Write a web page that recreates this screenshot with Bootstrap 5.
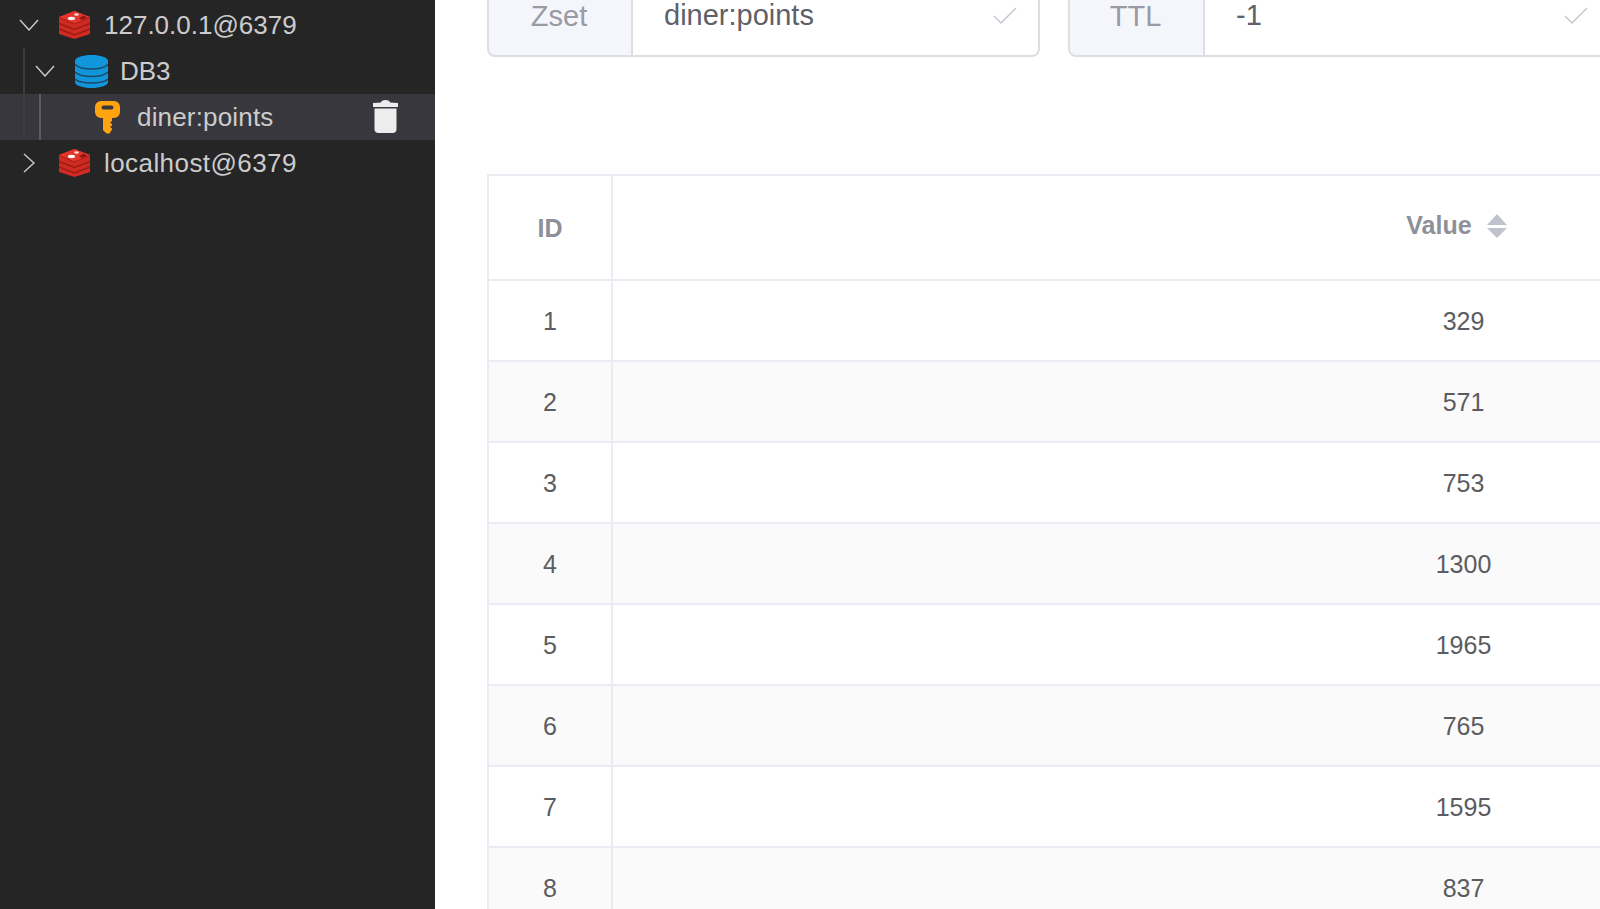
<!DOCTYPE html>
<html lang="en">
<head>
<meta charset="utf-8">
<title>Redis client</title>
<link href="https://cdn.jsdelivr.net/npm/bootstrap@5.3.0/dist/css/bootstrap.min.css" rel="stylesheet">
<style>
html,body{height:100%;overflow:hidden;background:#fff;font-family:"Liberation Sans",Arial,sans-serif}
.app-shell{height:909px;width:1600px}
.side-pane{width:435px;flex:none;background:#252526;padding-top:2px;color:#ccc;font-size:26px}
.tree-row{height:46px;line-height:46px;white-space:nowrap}
.tree-row.is-active{background:#37373d}
.guide{flex:none;width:2px;align-self:stretch}
.guide-outer{margin-left:23px;background:#3d3d3f}
.guide-inner{margin-left:14px;background:#5c5c60}
.twisty{flex:none;display:block}
.twisty-first{margin-left:19px}
.twisty-second{margin-left:10px}
.twisty-closed{margin-left:23px}
.tree-icon{flex:none;display:block}
.icon-redis-open{margin-left:19px}
.icon-redis-closed{margin-left:23px}
.icon-db{margin-left:20px}
.icon-key{margin-left:54px}
.tree-label{margin-left:13px}
.label-db{margin-left:12px}
.label-key{margin-left:17px;letter-spacing:.17px}
.label-host{letter-spacing:.43px}
.trash-icon{margin-left:auto;margin-right:37px;margin-bottom:2px;flex:none}
.main-pane{flex:1 1 auto;min-width:0;padding-left:52px;overflow:hidden;margin-top:-24px;height:933px}
.field-line{gap:28px;width:1400px;flex-wrap:nowrap}
.field-group{height:81px;flex:none;flex-wrap:nowrap;font-size:29px}
.field-key{width:553px}
.field-ttl{width:543px}
.field-group .input-group-text{background:#f5f6fb;border:2px solid #dcdee2;border-radius:8px 0 0 8px;color:#999aa3;font-size:29px;justify-content:center;padding:0 2px 0 0}
.field-key .input-group-text{width:146px}
.field-ttl .input-group-text{width:137px}
.field-group .form-control{border:2px solid #dcdee2;border-left:0;border-radius:0 8px 8px 0!important;color:#5f6168;font-size:29px;padding:0 21px 2px 31px;margin-left:0!important;line-height:1}
.grid-wrap{margin-top:117px}
.data-table{width:1829px;max-width:none;table-layout:fixed;border-collapse:separate;border-spacing:0;margin:0;--bs-table-color:#5b5c61;--bs-table-bg:#fff}
.data-table th,.data-table td{border:0;border-right:2px solid #e9ecf2;border-bottom:2px solid #e9ecf2;padding:0;text-align:center;vertical-align:middle;color:#5b5c61;font-size:25px}
.data-table tr>*:first-child{border-left:2px solid #e9ecf2;width:126px}
.data-table thead th{height:107px;border-top:2px solid #e9ecf2;color:#8e9099;font-weight:700}
.data-table tbody td{height:81.05px;padding-top:2px}
.data-table tbody tr:nth-child(even) td{background:#fafafa}
.data-table thead .value-head{padding-right:14px;padding-bottom:4px}
.data-table thead .id-head{padding-top:3px}
.sort-arrows{margin-left:15px;margin-top:-3px;vertical-align:middle;display:inline-block}
</style>
</head>
<body>
<div class="app-shell d-flex">
  <aside class="side-pane">
    <div class="tree-row d-flex align-items-center">
      <svg class="twisty twisty-first" width="20" height="12" viewBox="0 0 20 12"><path d="M1 1l9 10 9-10" fill="none" stroke="#ccc" stroke-width="1.4"/></svg>
      <svg class="tree-icon icon-redis-open" width="33" height="28" viewBox="0 0 33 28"><path d="M16.500 0L32 6v17l-15.500 5L1 23V6z" fill="#cf2b22"/><path d="M16.500 0L32 6 16.500 12.500 1 6z" fill="#e4352a"/><path d="M1 12.500l15.500 6 15.500-6M1 18l15.500 6 15.500-6" fill="none" stroke="#9c1c15" stroke-width="1.500"/><path d="M1 6.500l15.500 6.500 15.500-6.500" fill="none" stroke="#a81f17" stroke-width="1"/><ellipse cx="13.500" cy="7.500" rx="3.600" ry="1.700" fill="#fff"/><ellipse cx="18.500" cy="3.500" rx="2.300" ry="1.300" fill="#fbe3e0"/><path d="M21 7l5-2.500 3 2.500-5 2z" fill="#8f1a13"/></svg>
      <span class="tree-label">127.0.0.1@6379</span>
    </div>
    <div class="tree-row d-flex align-items-center">
      <span class="guide guide-outer"></span>
      <svg class="twisty twisty-second" width="20" height="12" viewBox="0 0 20 12"><path d="M1 1l9 10 9-10" fill="none" stroke="#ccc" stroke-width="1.4"/></svg>
      <svg class="tree-icon icon-db" width="33" height="33" viewBox="0 0 33 33"><path d="M0 6C0 2.500 7.500 0 16.500 0S33 2.500 33 6v21c0 3.500-7.500 6-16.500 6S0 30.500 0 27z" fill="#1296db"/><path d="M0 9.500c3 3 9 4.500 16.500 4.500S30 12.500 33 9.500M0 17c3 3 9 4.500 16.500 4.500S30 20 33 17M0 24c3 3 9 4 16.500 4S30 27 33 24" fill="none" stroke="#1c4a66" stroke-width="1.500"/></svg>
      <span class="tree-label label-db">DB3</span>
    </div>
    <div class="tree-row is-active d-flex align-items-center">
      <span class="guide guide-outer"></span>
      <span class="guide guide-inner"></span>
      <svg class="tree-icon icon-key" width="25" height="33" viewBox="0 0 25 33"><path fill-rule="evenodd" d="M6 0h13a6 6 0 0 1 6 6v5a6 6 0 0 1-6 6h-2v3l-2 1.500 2 1.500v1.500l-2 1.500 2 1.500v1l-2.500 4h-3L8 29V17H6a6 6 0 0 1-6-6V6a6 6 0 0 1 6-6zm2.500 4.500a1.500 1.500 0 0 0 0 4h8a1.500 1.500 0 0 0 0-4z" fill="#ffa40e"/></svg>
      <span class="tree-label label-key">diner:points</span>
      <svg class="trash-icon" width="25" height="33" viewBox="0 0 25 33"><path d="M8 2.500C8 1 10 0 12.500 0S17 1 17 2.500L25 3v4H0V3z" fill="#ededed"/><path d="M1.500 8.500h22V29a4 4 0 0 1-4 4h-14a4 4 0 0 1-4-4z" fill="#ededed"/></svg>
    </div>
    <div class="tree-row d-flex align-items-center">
      <svg class="twisty twisty-closed" width="12" height="20" viewBox="0 0 12 20"><path d="M1 1l10 9-10 9" fill="none" stroke="#ccc" stroke-width="1.400"/></svg>
      <svg class="tree-icon icon-redis-closed" width="33" height="28" viewBox="0 0 33 28"><path d="M16.500 0L32 6v17l-15.500 5L1 23V6z" fill="#cf2b22"/><path d="M16.500 0L32 6 16.500 12.500 1 6z" fill="#e4352a"/><path d="M1 12.500l15.500 6 15.500-6M1 18l15.500 6 15.500-6" fill="none" stroke="#9c1c15" stroke-width="1.500"/><path d="M1 6.500l15.500 6.500 15.500-6.500" fill="none" stroke="#a81f17" stroke-width="1"/><ellipse cx="13.500" cy="7.500" rx="3.600" ry="1.700" fill="#fff"/><ellipse cx="18.500" cy="3.500" rx="2.300" ry="1.300" fill="#fbe3e0"/><path d="M21 7l5-2.500 3 2.500-5 2z" fill="#8f1a13"/></svg>
      <span class="tree-label label-host">localhost@6379</span>
    </div>
  </aside>
  <main class="main-pane">
    <div class="field-line d-flex">
      <div class="input-group field-group field-key">
        <span class="input-group-text">Zset</span>
        <div class="form-control d-flex align-items-center justify-content-between"><span>diner:points</span><svg width="24" height="18" viewBox="0 0 24 18"><path d="M1 9l7 7L23 1" fill="none" stroke="#c5c8ce" stroke-width="1.500"/></svg></div>
      </div>
      <div class="input-group field-group field-ttl">
        <span class="input-group-text">TTL</span>
        <div class="form-control d-flex align-items-center justify-content-between"><span>-1</span><svg width="24" height="18" viewBox="0 0 24 18"><path d="M1 9l7 7L23 1" fill="none" stroke="#c5c8ce" stroke-width="1.500"/></svg></div>
      </div>
    </div>
    <div class="grid-wrap">
      <table class="table data-table">
        <thead>
          <tr><th class="id-head">ID</th><th class="value-head">Value<svg class="sort-arrows" width="20" height="24" viewBox="0 0 20 24"><path d="M10 0l10 11H0zM0 14h20L10 24z" fill="#bfc3cb"/></svg></th></tr>
        </thead>
        <tbody>
          <tr><td>1</td><td>329</td></tr>
          <tr><td>2</td><td>571</td></tr>
          <tr><td>3</td><td>753</td></tr>
          <tr><td>4</td><td>1300</td></tr>
          <tr><td>5</td><td>1965</td></tr>
          <tr><td>6</td><td>765</td></tr>
          <tr><td>7</td><td>1595</td></tr>
          <tr><td>8</td><td>837</td></tr>
        </tbody>
      </table>
    </div>
  </main>
</div>
<script src="https://cdn.jsdelivr.net/npm/bootstrap@5.3.0/dist/js/bootstrap.bundle.min.js"></script>
</body>
</html>
